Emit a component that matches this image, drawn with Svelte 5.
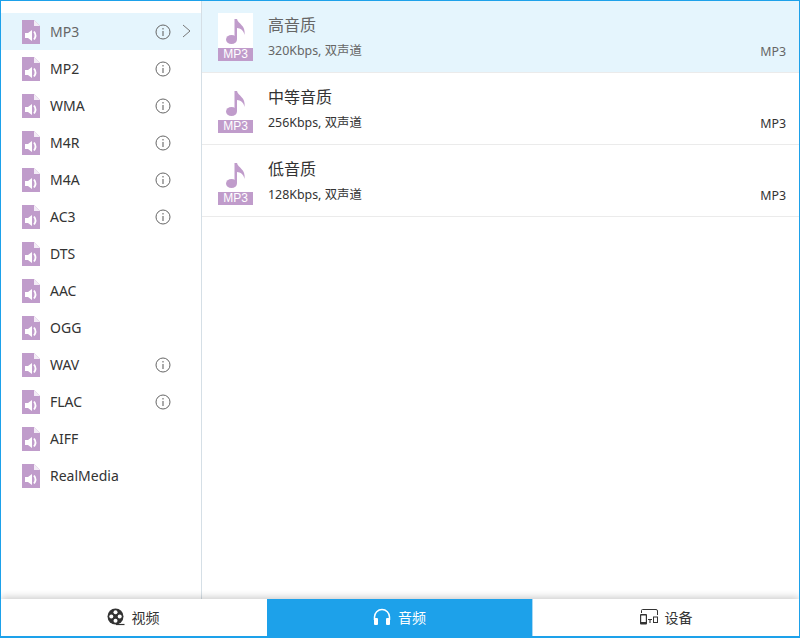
<script lang="ts">
  const formats = [
    { name: 'MP3', info: true },
    { name: 'MP2', info: true },
    { name: 'WMA', info: true },
    { name: 'M4R', info: true },
    { name: 'M4A', info: true },
    { name: 'AC3', info: true },
    { name: 'DTS', info: false },
    { name: 'AAC', info: false },
    { name: 'OGG', info: false },
    { name: 'WAV', info: true },
    { name: 'FLAC', info: true },
    { name: 'AIFF', info: false },
    { name: 'RealMedia', info: false },
  ];

  const presets = [
    { title: '高音质', detail: '320Kbps, 双声道' },
    { title: '中等音质', detail: '256Kbps, 双声道' },
    { title: '低音质', detail: '128Kbps, 双声道' },
  ];
</script>

<div class="window">
  <div class="main">
    <ul class="formats">
      {#each formats as f, i}
        <li class="format" class:active={i === 0}>
          <svg class="file-icon" width="18" height="24" viewBox="0 0 18 24">
            <path d="M0 0H12L18 6V24H0Z" fill="#c09ccb" />
            <path d="M12 0L18 6H12Z" fill="#f3ecf6" />
            <path d="M3 13H6L10 10V21L6 18H3Z" fill="#fff" />
            <path d="M12 11.500Q15 15.500 12 19.500" fill="none" stroke="#fff" stroke-width="1.800" />
          </svg>
          <span class="format-name">{f.name}</span>
          {#if f.info}
            <svg class="info" width="16" height="16" viewBox="0 0 16 16">
              <circle cx="8" cy="8" r="7" fill="none" stroke="#666" />
              <path d="M8 4V5.500M8 7V12" stroke="#666" stroke-width="1.100" fill="none" />
            </svg>
          {/if}
          {#if i === 0}
            <svg class="chevron" width="9" height="14" viewBox="0 0 9 14">
              <path d="M1 1L8 7L1 13" fill="none" stroke="#777" />
            </svg>
          {/if}
        </li>
      {/each}
    </ul>

    <div class="presets">
      {#each presets as p, i}
        <div class="preset" class:active={i === 0}>
          <div class="thumb">
            <svg class="note" width="20" height="25" viewBox="0 0 20 25">
              <ellipse cx="5.500" cy="20.500" rx="5.500" ry="4.500" fill="#c09ccb" />
              <path d="M8.500 20V0H11C12 5 20 6 18.500 16C17.500 11 14.500 9.500 11 9V20Z" fill="#c09ccb" />
            </svg>
            <span class="thumb-label">MP3</span>
          </div>
          <div class="preset-text">
            <div class="preset-title">{p.title}</div>
            <div class="preset-detail">{p.detail}</div>
          </div>
          <span class="preset-format">MP3</span>
        </div>
      {/each}
    </div>
  </div>

  <div class="tabs">
    <div class="tab video">
      <svg width="18" height="18" viewBox="0 0 18 18">
        <circle cx="8.500" cy="8.500" r="8" fill="#333" />
        <circle cx="8.500" cy="4.300" r="2" fill="#fff" />
        <circle cx="8.500" cy="12.700" r="2" fill="#fff" />
        <circle cx="4.300" cy="8.500" r="2" fill="#fff" />
        <circle cx="12.700" cy="8.500" r="2" fill="#fff" />
        <path d="M9 16.500H17.500" stroke="#333" stroke-width="1.200" />
      </svg>
      <span>视频</span>
    </div>
    <div class="tab active">
      <svg width="18" height="18" viewBox="0 0 18 18">
        <path d="M1.500 12V9A7.500 7.500 0 0 1 16.500 9V12" fill="none" stroke="#fff" stroke-width="1.500" />
        <rect x="1" y="10" width="4" height="7" rx="1" fill="#fff" />
        <rect x="13" y="10" width="4" height="7" rx="1" fill="#fff" />
      </svg>
      <span>音频</span>
    </div>
    <div class="tab">
      <svg width="18" height="16" viewBox="0 0 18 16">
        <path d="M1.500 4V1.500Q1.500 0.500 2.500 0.500H16Q17.500 0.500 17.500 2V6" fill="none" stroke="#333" stroke-width="1" />
        <rect x="0" y="5" width="7" height="10.500" rx="1" fill="#333" />
        <rect x="1.200" y="6.500" width="4.600" height="6.500" fill="#fff" />
        <path d="M8 10.500H12M10 10.500V14" fill="none" stroke="#333" stroke-width="1.100" />
        <rect x="13.500" y="8" width="4" height="5.500" fill="none" stroke="#333" stroke-width="1" />
      </svg>
      <span>设备</span>
    </div>
  </div>
</div>

<style>
  :global(body) {
    margin: 0;
    background: #fff;
  }

  .window {
    width: 800px;
    height: 638px;
    box-sizing: border-box;
    border: 1px solid #1da1ea;
    border-bottom-width: 2px;
    display: flex;
    flex-direction: column;
    font-family: "Noto Sans", "Noto Sans CJK SC", sans-serif;
    color: #333;
    overflow: hidden;
  }

  .main {
    flex: 1;
    display: flex;
    min-height: 0;
  }

  .formats {
    width: 200px;
    flex-shrink: 0;
    margin: 0;
    padding: 12px 0 0;
    list-style: none;
    border-right: 1px solid #d5dfe6;
  }

  .format {
    height: 37px;
    display: flex;
    align-items: center;
    padding-left: 21px;
    position: relative;
  }

  .format.active {
    background: #e5f5fd;
    color: #666;
  }

  .format-name {
    margin-left: 10px;
    font-size: 14px;
  }

  .info {
    position: absolute;
    left: 154px;
    top: 11px;
  }

  .chevron {
    position: absolute;
    left: 181px;
    top: 11px;
  }

  .presets {
    flex: 1;
  }

  .preset {
    height: 71px;
    display: flex;
    align-items: center;
    border-bottom: 1px solid #ebebeb;
    position: relative;
    padding-left: 16px;
  }

  .preset.active {
    background: #e5f5fd;
    color: #666;
  }

  .thumb {
    width: 35px;
    height: 48px;
    margin-top: 1px;
    display: flex;
    flex-direction: column;
    align-items: center;
    justify-content: flex-end;
  }

  .preset.active .thumb {
    background: #fff;
  }

  .note {
    margin-bottom: 4px;
  }

  .thumb-label {
    width: 100%;
    height: 13px;
    line-height: 13px;
    background: #c09ccb;
    color: #fff;
    font-family: "Liberation Sans", sans-serif;
    font-size: 12px;
    text-align: center;
  }

  .preset-text {
    margin-left: 15px;
    margin-top: 1px;
  }

  .preset-title {
    font-size: 16px;
    line-height: 20px;
    margin-bottom: 8px;
  }

  .preset-detail {
    font-size: 12.400px;
    line-height: 16px;
  }

  .preset-format {
    position: absolute;
    right: 13px;
    bottom: 12px;
    font-size: 12.400px;
    line-height: 16px;
  }

  .tabs {
    height: 37px;
    display: flex;
    background: #fff;
    box-shadow: 0 -2px 7px rgba(0, 0, 0, 0.2);
    position: relative;
  }

  .tab {
    flex: 1;
    display: flex;
    align-items: center;
    justify-content: center;
    gap: 7px;
    font-size: 14px;
    padding-bottom: 1px;
  }

  .tab.video {
    flex: 0 0 266px;
    box-sizing: border-box;
    padding-right: 2px;
  }

  .tab.active {
    background: #1da1ea;
    color: #fff;
    flex: 0 0 266px;
    border-right: 1px solid #a9d8f3;
    box-sizing: border-box;
  }
</style>
